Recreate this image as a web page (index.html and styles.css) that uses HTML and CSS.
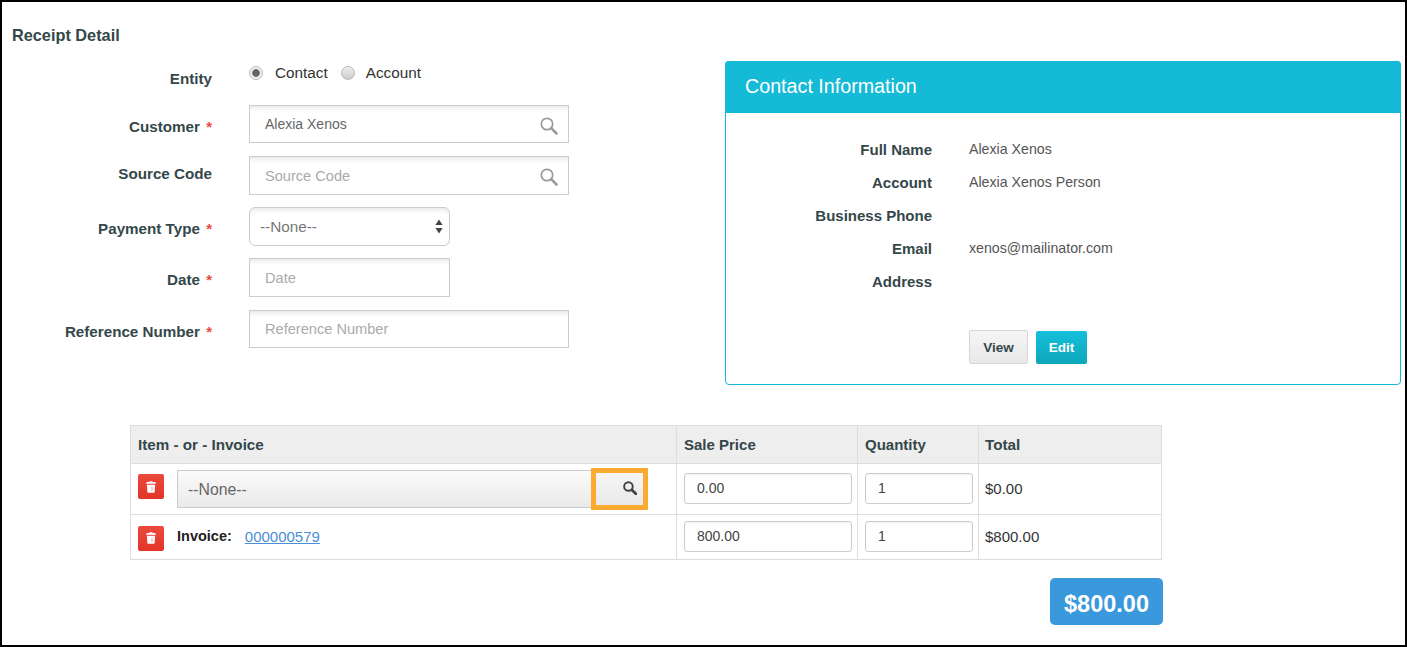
FILE: index.html
```html
<!DOCTYPE html>
<html lang="en">
<head>
<meta charset="utf-8">
<title>Receipt Detail</title>
<link rel="stylesheet" href="styles.css">
</head>
<body>
<svg class="defs" width="0" height="0" aria-hidden="true">
  <symbol id="trash" viewBox="0 0 12 14">
    <path fill="#fff" d="M4.500 0h3l.5 1h1.500C11 1 12 1.800 12 3.200H0C0 1.800 1 1 2.500 1H4zM1 4.200h10L10.400 13c0 .6-.5 1-1 1H2.600c-.5 0-1-.4-1-1z"/>
    <path fill="#f0a89f" d="M6.200 6.500h.7v5.500h-.7zM7.900 6.500h.7v5.500h-.7z"/>
  </symbol>
  <symbol id="lens" viewBox="0 0 18 18">
    <circle cx="7" cy="7" r="5.700" fill="none" stroke="currentColor" stroke-width="1.700"/>
    <path d="M11.200 11.200l5.300 5.300" fill="none" stroke="currentColor" stroke-width="2.600" stroke-linecap="round"/>
  </symbol>
  <symbol id="lens-bold" viewBox="0 0 18 18">
    <circle cx="7" cy="7" r="5.500" fill="none" stroke="currentColor" stroke-width="2.500"/>
    <path d="M11.500 11.500l5 5" fill="none" stroke="currentColor" stroke-width="3.600" stroke-linecap="round"/>
  </symbol>
</svg>
<div class="frame">
  <h1 class="title">Receipt Detail</h1>
  <div class="top">
    <form class="form">
      <div class="row row-entity">
        <label class="label label-entity">Entity</label>
        <div class="radios">
          <input class="radio" type="radio" name="entity" checked><span class="radio-text">Contact</span>
          <input class="radio radio-second" type="radio" name="entity"><span class="radio-text">Account</span>
        </div>
      </div>
      <div class="row row-customer">
        <label class="label">Customer <span class="req">*</span></label>
        <div class="field wide short">
          <input class="input input-value" type="text" value="Alexia Xenos">
          <svg class="lens"><use href="#lens"/></svg>
        </div>
      </div>
      <div class="row">
        <label class="label label-source">Source Code</label>
        <div class="field wide">
          <input class="input" type="text" placeholder="Source Code">
          <svg class="lens"><use href="#lens"/></svg>
        </div>
      </div>
      <div class="row">
        <label class="label">Payment Type <span class="req">*</span></label>
        <div class="field narrow">
          <select class="input select"><option>--None--</option></select>
          <svg class="updown" viewBox="0 0 8 14"><path fill="#444" d="M4 0l3.600 5.500H.4zM4 14L.4 8.500h7.200z"/></svg>
        </div>
      </div>
      <div class="row">
        <label class="label">Date <span class="req">*</span></label>
        <div class="field narrow"><input class="input" type="text" placeholder="Date"></div>
      </div>
      <div class="row row-ref">
        <label class="label">Reference Number <span class="req">*</span></label>
        <div class="field wide short"><input class="input" type="text" placeholder="Reference Number"></div>
      </div>
    </form>
    <section class="panel">
      <h2 class="panel-head">Contact Information</h2>
      <div class="panel-body">
        <dl class="info">
          <dt>Full Name</dt><dd>Alexia Xenos</dd>
          <dt>Account</dt><dd>Alexia Xenos Person</dd>
          <dt>Business Phone</dt><dd></dd>
          <dt>Email</dt><dd>xenos@mailinator.com</dd>
          <dt>Address</dt><dd></dd>
        </dl>
        <div class="actions">
          <button class="btn btn-view" type="button">View</button>
          <button class="btn btn-edit" type="button">Edit</button>
        </div>
      </div>
    </section>
  </div>
  <div class="lower">
    <table class="items">
      <colgroup>
        <col class="c1"><col class="c2"><col class="c3"><col class="c4">
      </colgroup>
      <thead>
        <tr class="tr-head"><th>Item - or - Invoice</th><th>Sale Price</th><th>Quantity</th><th>Total</th></tr>
      </thead>
      <tbody>
        <tr class="tr-one">
          <td class="item">
            <div class="item-row item-row-lookup">
              <button class="trash" type="button"><svg class="trash-icon"><use href="#trash"/></svg></button>
              <div class="lookup">
                <span class="lookup-text">--None--</span>
                <span class="lookup-btn"><svg class="lookup-lens"><use href="#lens-bold"/></svg></span>
              </div>
            </div>
          </td>
          <td><input class="cell-input" type="text" value="0.00"></td>
          <td><input class="cell-input" type="text" value="1"></td>
          <td class="cell-total">$0.00</td>
        </tr>
        <tr class="tr-two">
          <td class="item">
            <div class="item-row item-row-invoice">
              <button class="trash" type="button"><svg class="trash-icon"><use href="#trash"/></svg></button>
              <b class="inv-label">Invoice:</b>
              <a class="inv-link" href="#">000000579</a>
            </div>
          </td>
          <td><input class="cell-input" type="text" value="800.00"></td>
          <td><input class="cell-input" type="text" value="1"></td>
          <td class="cell-total">$800.00</td>
        </tr>
      </tbody>
    </table>
    <div class="grand">$800.00</div>
  </div>
</div>
</body>
</html>
```
FILE: styles.css
```css
* { box-sizing: border-box; }
html, body { margin: 0; padding: 0; background: #fff; }
body { font-family: "Liberation Sans", Arial, sans-serif; font-size: 14px; color: #333; overflow: hidden; }
.defs { position: absolute; }
.frame { width: 1407px; height: 647px; border: 2px solid #000; overflow: hidden; }
.title { margin: 0; padding: 23px 0 0 10px; height: 59px; font-size: 16.3px; line-height: 20px; font-weight: 700; color: #34474a; }
.top { display: flex; align-items: flex-start; }
.form { width: 723px; display: flex; flex-direction: column; gap: 12px; }
.row { display: flex; align-items: flex-start; gap: 37px; }
.row-entity { height: 32px; }
.row-customer { margin-bottom: 1px; }
.row-ref { margin-top: 1px; }
.label { width: 210px; flex: none; text-align: right; padding-top: 12px; font-size: 15.2px; line-height: 20px; font-weight: 700; color: #34474a; }
.label-entity { padding-top: 8px; }
.label-source { padding-top: 8px; }
.req { color: #e74c3c; font-size: 15px; margin-left: 2px; }
.radios { display: flex; align-items: center; height: 24px; width: 320px; }
.radio { appearance: none; width: 14px; height: 14px; margin: 0 12px 0 0; border-radius: 50%; border: 1px solid #bbb; background: linear-gradient(#eee, #ccc); flex: none; }
.radio:checked { background: radial-gradient(circle, #666 0, #666 3.4px, #eee 4.200px); }
.radio-second { margin-left: 13px; margin-right: 11px; }
.radio-text { font-size: 15.3px; color: #333; }
.field { position: relative; height: 39px; flex: none; }
.short { height: 38px; }
.wide { width: 320px; }
.narrow { width: 201px; }
.input { display: block; width: 100%; height: 100%; padding: 0 15px; border: 1px solid #ccc; border-radius: 0; background: #fff; box-shadow: inset 0 6px 6px -5px rgba(0,0,0,.13); font: 14px "Liberation Sans", Arial, sans-serif; color: #666; outline: none; }
.input-value { padding-bottom: 1px; }
.input::placeholder { color: #aaa; opacity: 1; font-size: 14.6px; }
.select { appearance: none; padding: 0 10px; border-radius: 6px; color: #777; font-size: 15.300px; }
.lens { position: absolute; right: 11px; top: 12px; width: 18px; height: 18px; color: #9a9a9a; }
.updown { position: absolute; right: 7px; top: 12px; width: 8px; height: 15px; }
.panel { width: 676px; height: 324px; border: 1px solid #14bad6; border-radius: 4px; flex: none; }
.panel-head { margin: -1px -1px 0; height: 52px; padding: 0 20px; background: #14bad6; border-radius: 4px 4px 0 0; color: #fff; font-size: 19.7px; line-height: 51px; font-weight: 400; }
.panel-body { padding-top: 19px; }
.info { margin: 0; display: grid; grid-template-columns: 206px 1fr; column-gap: 37px; grid-auto-rows: 33px; align-items: center; }
.info dt { text-align: right; font-weight: 700; font-size: 15px; color: #34474a; padding-top: 2px; }
.info dd { margin: 0; font-size: 14.2px; color: #555; }
.actions { display: flex; align-items: center; gap: 8px; margin: 33px 0 0 243px; }
.btn { height: 33px; padding: 0; border-radius: 2px; font: 700 13.500px "Liberation Sans", Arial, sans-serif; }
.btn-view { width: 59px; height: 34px; border: 1px solid #d5d5d5; background: linear-gradient(#f5f5f5, #e8e8e8); color: #34474a; }
.btn-edit { width: 51px; border: 0; background: linear-gradient(#14c0da, #0fa6ba); color: #fff; }
.lower { margin: 40px 0 0 128px; width: 1033px; }
.items { width: 1031px; table-layout: fixed; border-collapse: collapse; }
.c1 { width: 546px; } .c2 { width: 181px; } .c3 { width: 121px; } .c4 { width: 183px; }
.items th, .items td { border: 1px solid #ddd; padding: 0 6px; text-align: left; font-size: 15px; color: #333; }
.items th { background: #eee; font-size: 15.2px; font-weight: 700; color: #34474a; }
.items th:first-child { padding-left: 7px; }
.items th:nth-child(2), .items th:nth-child(3) { padding-left: 7px; font-size: 15px; }
.items .item { padding: 0 7px; }
.items .cell-total { padding-bottom: 2px; }
.tr-head { height: 38px; }
.tr-one { height: 51px; }
.tr-two { height: 45px; }
.item-row { display: flex; align-items: center; }
.item-row-lookup { align-items: flex-start; }
.item-row-lookup .trash { margin-top: 6px; }
.item-row-invoice .trash { margin-top: 2px; }
.trash { width: 26px; height: 25px; padding: 0; border: 0; border-radius: 2px; background: linear-gradient(#ea4a3c, #e3352a); display: flex; align-items: center; justify-content: center; flex: none; margin-right: 13px; }
.trash-icon { width: 10px; height: 12px; }
.lookup { display: flex; align-items: center; flex: 1; height: 42px; }
.lookup-text { flex: 1; height: 38px; line-height: 38px; padding-left: 10px; border: 1px solid #ccc; border-right: 0; background: linear-gradient(#fafafa, #eaeaea); font-size: 15.8px; color: #666; }
.lookup-btn { width: 57px; height: 42px; border: 5px solid #fbab30; background: linear-gradient(#f6f6f6, #e9e9e9); display: flex; align-items: center; justify-content: flex-end; padding-right: 6px; margin-right: 21px; flex: none; }
.lookup-lens { width: 14px; height: 14px; color: #444; margin-top: -2px; }
.inv-label { color: #222; font-size: 14.5px; margin: 0 13px 2px 0; }
.inv-link { color: #4a8fd8; font-size: 15px; margin-bottom: 2px; }
.cell-input { display: block; width: 100%; height: 31px; margin-top: -2px; padding: 0 12px; border: 1px solid #ccc; border-radius: 3px; font: 14px "Liberation Sans", Arial, sans-serif; color: #444; background: #fff; box-shadow: inset 0 1px 2px rgba(0,0,0,.05); outline: none; }
.items td:nth-child(2) .cell-input { width: 168px; margin-left: 1px; }
.items td:nth-child(3) .cell-input { width: 108px; margin-left: 1px; }
.grand { margin: 18px 0 0 auto; width: 113px; height: 47px; border-radius: 5px; background: #3a98dc; color: #fff; font-size: 23.500px; font-weight: 700; line-height: 52px; text-align: center; }
```
